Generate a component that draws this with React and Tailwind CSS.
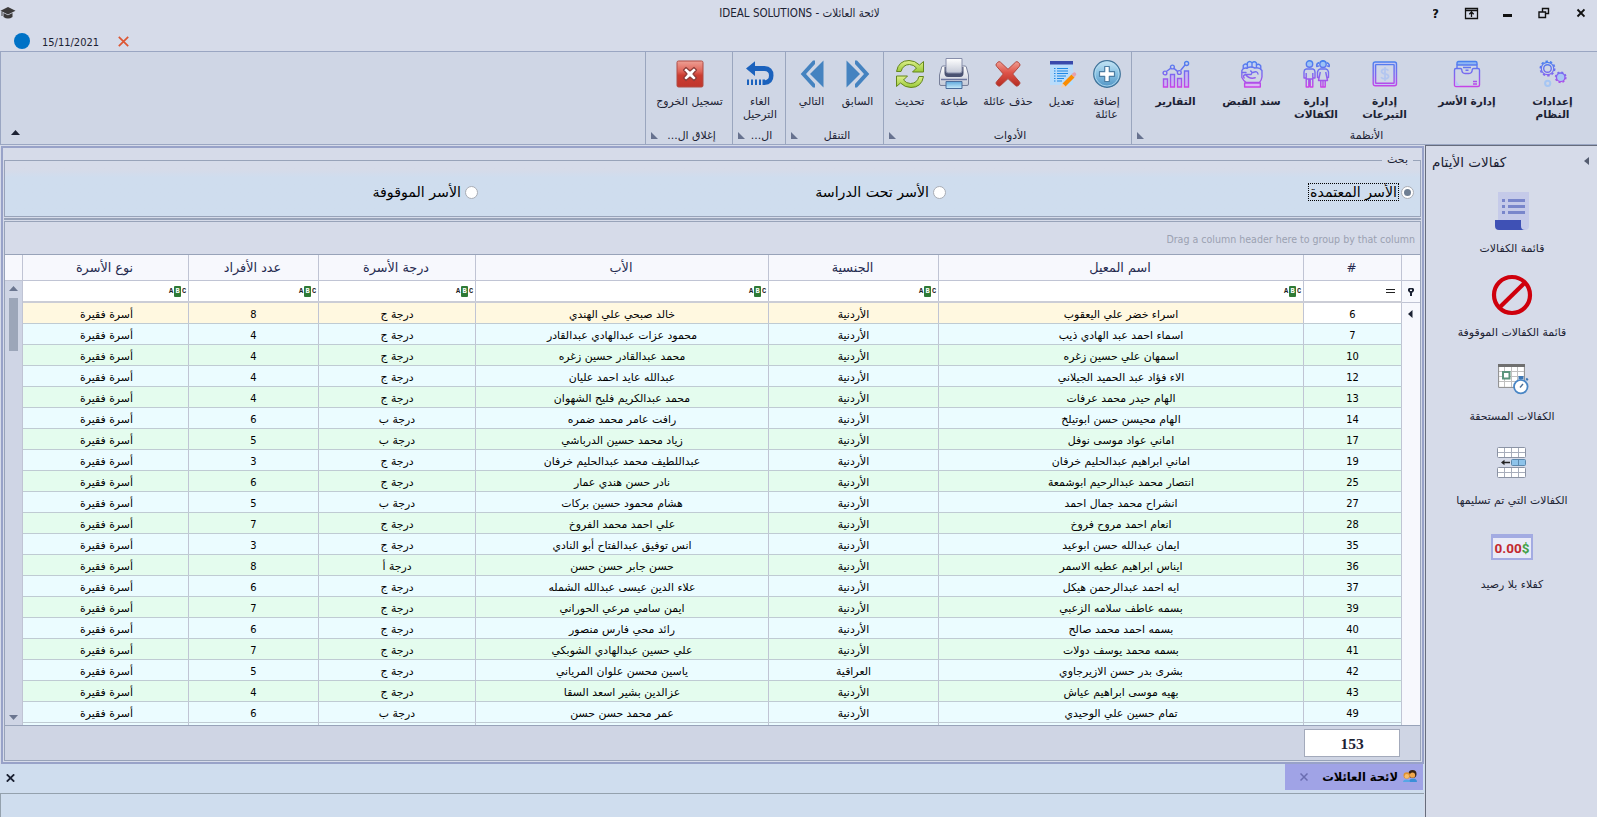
import React from "react";

const rows = [
  [6, "اسراء خضر علي اليعقوب", "الأردنية", "خالد صبحي علي الهندي", "درجة ج", 8],
  [7, "اسماء احمد عبد الهادي ذيب", "الأردنية", "محمود عزات عبدالهادي عبدالقادر", "درجة ج", 4],
  [10, "اسمهان علي حسين زغره", "الأردنية", "محمد عبدالقادر حسين زغره", "درجة ج", 4],
  [12, "الاء فؤاد عبد الحميد الجيلاني", "الأردنية", "عبدالله عايد احمد عليان", "درجة ج", 4],
  [13, "الهام حيدر محمد عرفات", "الأردنية", "محمد عبدالكريم فليح الشهوان", "درجة ج", 4],
  [14, "الهام محيسن حسن ابوتيلخ", "الأردنية", "رافت عامر محمد ضمره", "درجة ب", 6],
  [17, "اماني عواد موسى نوفل", "الأردنية", "زياد محمد حسين الدرباشي", "درجة ب", 5],
  [19, "اماني ابراهيم عبدالحليم خرفان", "الأردنية", "عبداللطيف محمد عبدالحليم خرفان", "درجة ج", 3],
  [25, "انتصار محمد عبدالرحيم ابوشمعة", "الأردنية", "نادر حسن هندي عمار", "درجة ج", 6],
  [27, "انشراح محمد جمال احمد", "الأردنية", "هشام محمود حسين بركات", "درجة ب", 5],
  [28, "انعام احمد مروح فروخ", "الأردنية", "علي احمد محمد الفروخ", "درجة ج", 7],
  [35, "ايمان عبدالله حسن ابوعيد", "الأردنية", "انس توفيق عبدالفتاح أبو النادي", "درجة ج", 3],
  [36, "ايناس ابراهيم عطيه الاسمر", "الأردنية", "حسن جابر حسن حسن", "درجة أ", 8],
  [37, "ايه احمد عبدالرحمن هيكل", "الأردنية", "علاء الدين عيسى عبدالله الشمله", "درجة ج", 6],
  [39, "بسمه عاطف سلامه الزعبي", "الأردنية", "ايمن سامي مرعي الحوراني", "درجة ج", 7],
  [40, "بسمه احمد محمد صالح", "الأردنية", "رائد محي فارس منصور", "درجة ج", 6],
  [41, "بسمه محمد يوسف دولات", "الأردنية", "علي حسين عبدالهادي الشوبكي", "درجة ج", 7],
  [42, "بشرى بدر حسن الازيرجاوي", "العراقية", "ياسين محسن علوان المرياني", "درجة ج", 5],
  [43, "بهيه موسى ابراهيم عياش", "الأردنية", "عزالدين بشير اسعد السقا", "درجة ج", 4],
  [49, "تمام حسين علي الوحيدي", "الأردنية", "عمر محمد حسن حسن", "درجة ب", 6],
];

const GRID = "grid grid-cols-[166px_130px_157px_293px_170px_365px_98px]";
const SANS = "font-['DejaVu_Sans',sans-serif]";
const NARROW = "font-['DejaVu_Sans_Condensed','DejaVu_Sans',sans-serif] [font-stretch:condensed]";

/* ---------- ribbon icons ---------- */

function Grad({ id }) {
  return (
    <defs>
      <linearGradient id={id} gradientUnits="userSpaceOnUse" x1="0" y1="0" x2="0" y2="28">
        <stop offset="0" stopColor="#4484ee" />
        <stop offset="0.5" stopColor="#7b68f0" />
        <stop offset="1" stopColor="#cf3fe6" />
      </linearGradient>
    </defs>
  );
}

function ReportIcon() {
  return (
    <svg width="28" height="28" viewBox="0 0 28 28" fill="none" stroke="url(#g1)" strokeWidth="1.4">
      <Grad id="g1" />
      <path fill="#c9b5f3" d="M1.5 19h4v8h-4zM8.500 14.500h4v12.500h-4zM15.500 18.500h4v8.500h-4zM22.500 11h4v16h-4z" />
      <path d="M4.300 11.500 8.600 8.400M12 8.400l3.500 3M18.600 10.500 23 5" />
      <circle cx="3" cy="13" r="1.900" /><circle cx="10.400" cy="7" r="1.900" /><circle cx="17.300" cy="12.500" r="1.900" /><circle cx="24.600" cy="3.500" r="2" />
    </svg>
  );
}

function FistIcon() {
  return (
    <svg width="24" height="28" viewBox="0 0 26 28" fill="none" stroke="url(#g2)" strokeWidth="1.5" strokeLinejoin="round" strokeLinecap="round" preserveAspectRatio="none">
      <Grad id="g2" />
      <path fill="#bfd0f6" d="M3.500 8V5.500Q6 2.800 8 5V8M8 6V2.800Q10.500.2 13 2.800V7M13 3Q15.500.5 17.800 3V7.500M17.800 5Q20.500 3 22.500 6V9" />
      <path d="M2 10.500Q3.500 7.500 7 8.200 12 6 16 8 21 7 23.800 10.500V17Q23.500 20 21 22.500H6.500Q4 21 2 17.500Z" />
      <path d="M2.500 12.500h4M4.500 18Q2.500 15.500 6 14.500H12Q14 12 11.500 11M6 14.500Q10 19.500 16.500 17.800M14 12.500Q19 10.500 19.500 14" />
      <path fill="#d9b9f5" d="M5 23h17v4H5z" />
    </svg>
  );
}

function KidsIcon() {
  return (
    <svg width="28" height="28" viewBox="0 0 28 28" fill="none" stroke="url(#g3)" strokeWidth="1.4" strokeLinejoin="round">
      <Grad id="g3" />
      <circle cx="7.500" cy="4" r="3.200" fill="#9cc3f5" />
      <path d="M4 9h7Q13 9.500 13 12v6h-2.200M4 9Q2 9.500 2 12v6h2.200M4.200 13v14h2.600v-7h1.400v7h2.600V13M4.200 19h6.600" />
      <circle cx="21" cy="4.300" r="3.200" fill="#9cc3f5" />
      <path d="M17.500 2.500Q14 3.500 14.800 6.500L17 5.800M24.500 2.500Q28 3.500 27.200 6.500L25 5.800M18 2Q21-.6 24 2" />
      <path d="M18 9h6Q26 9.500 26.500 12v5.500h-2M18 9Q16 9.500 15.500 12v5.500h2M18.300 12 16.500 20.500h9L23.700 12M18.800 21v6h2.200v-6M21 21v6h2.200v-6" />
    </svg>
  );
}

function DollarIcon() {
  return (
    <svg width="26" height="28" viewBox="0 0 26 28" fill="none" stroke="url(#g4)" strokeWidth="1.4">
      <Grad id="g4" />
      <rect x="1.200" y="2" width="23.300" height="23.800" rx="2" fill="#c3c6f3" />
      <rect x="3.600" y="4.600" width="18.500" height="18.600" rx="0.500" fill="#cfd6e8" />
      <path d="M16.500 10.500Q15 9 12.500 9.200 9.500 9.500 9.500 11.700 10 13.500 13 13.900 16.600 14.400 16.600 16.500 16.500 18.700 13 18.900 10.300 18.900 9 17.300M13 7v14" stroke="#b3c6f0" strokeWidth="1.700" />
    </svg>
  );
}

function ArchiveIcon() {
  return (
    <svg width="28" height="28" viewBox="0 0 28 28" fill="none" stroke="url(#g5)" strokeWidth="1.4" strokeLinejoin="round">
      <Grad id="g5" />
      <path fill="#8fb8f4" d="M4 5V3Q4 1.500 5.500 1.500h17Q24 1.500 24 3v2" />
      <path d="M4 9V5h20v4M1.500 10Q1.500 8.500 3 8.500h4.500Q8.500 8.500 8.700 9.500 9 13.500 12 13.500h4Q19 13.500 19.300 9.500 19.500 8.500 20.500 8.500H25Q26.500 8.500 26.500 10V25Q26.500 26.500 25 26.500H3Q1.500 26.500 1.500 25ZM10 7.500h8M12.500 10.200h3M20 21.500h4M20 24h4" />
      <path d="M2.500 20 7 26H2.500Z" fill="#b9c9f5" stroke="none" />
    </svg>
  );
}

function GearsIcon() {
  return (
    <svg width="28" height="28" viewBox="0 0 28 28" fill="none" stroke="url(#g6)" strokeWidth="1.4">
      <Grad id="g6" />
      <circle cx="8.500" cy="8.500" r="3.800" />
      <circle cx="8.500" cy="8.500" r="6.200" strokeWidth="1.200" />
      <circle cx="8.500" cy="8.500" r="7.200" strokeDasharray="2.500 2.020" strokeWidth="1.600" />
      <circle cx="21.700" cy="17.300" r="4.300" fill="#a9c6f5" />
      <circle cx="21.700" cy="17.300" r="5.200" strokeDasharray="2 2.080" strokeWidth="1.500" />
      <circle cx="8.700" cy="23.300" r="2.600" stroke="#a6c6f3" strokeWidth="2" />
    </svg>
  );
}

function AddIcon() {
  return (
    <svg width="30" height="30" viewBox="0 0 30 30">
      <defs><linearGradient id="add" x1="0" y1="0" x2="0" y2="1"><stop offset="0" stopColor="#c5e5f5" /><stop offset="0.500" stopColor="#86c0e2" /><stop offset="1" stopColor="#4f93c4" /></linearGradient></defs>
      <circle cx="15" cy="15" r="13.300" fill="url(#add)" stroke="#3f7298" strokeWidth="1.200" />
      <circle cx="15" cy="15" r="12" fill="none" stroke="#b5dcf0" strokeWidth="0.800" />
      <path d="M12.700 7.500h4.600v5.200h5.200v4.600h-5.200v5.200h-4.600v-5.200H7.500v-4.600h5.200z" fill="#fff" stroke="#4b7da3" strokeWidth="1.200" strokeLinejoin="round" />
    </svg>
  );
}

function EditIcon() {
  return (
    <svg width="30" height="30" viewBox="0 0 30 30">
      <path fill="#b9dcfb" d="M3 5h23v21H3z" />
      <path fill="#3949ab" d="M3 2h23v3.500H3z" />
      <path stroke="#1e88e5" strokeWidth="1.200" d="M7 9.500h1.500M10 9.500h11M7 12h1.500M10 12h11M7 14.500h1.500M10 14.500h11M7 17h1.500M10 17h9M7 19.500h1.500M10 19.500h7M7 22h1.500M10 22h5" />
      <path fill="#fb8c00" d="m15.500 24.500 9-9 3 3-9 9z" />
      <path fill="#f7cfa8" d="m15.500 24.500 3 3-4.500 1.200z" />
      <path fill="#e5a0b0" d="M26.300 13.700q1.200-1 2.400.2 1.200 1.200.2 2.400l-1.400 1.800-3-3z" />
    </svg>
  );
}

function DeleteIcon() {
  return (
    <svg width="30" height="30" viewBox="0 0 30 30">
      <defs><linearGradient id="del" x1="0" y1="0" x2="0" y2="1"><stop offset="0" stopColor="#ef9d92" /><stop offset="0.450" stopColor="#de5348" /><stop offset="1" stopColor="#b52c22" /></linearGradient></defs>
      <path d="M7.500 3.200Q6 2 4.700 3.300L3.500 4.600Q2.300 6 3.600 7.300L10.300 15 3.600 22.700Q2.300 24 3.500 25.300L4.900 26.700Q6.200 27.700 7.600 26.500L15 19.600 22.400 26.500Q23.800 27.700 25.100 26.700L26.500 25.300Q27.700 24 26.400 22.700L19.700 15 26.400 7.300Q27.700 6 26.500 4.600L25.300 3.300Q24 2 22.500 3.200L15 10.300Z" fill="url(#del)" stroke="#b3473e" strokeWidth="1" strokeLinejoin="round" />
    </svg>
  );
}

function PrintIcon() {
  return (
    <svg width="32" height="32" viewBox="0 0 32 32">
      <defs>
        <linearGradient id="pr" x1="0" y1="0" x2="0" y2="1"><stop offset="0" stopColor="#ffffff" /><stop offset="1" stopColor="#c3c8d6" /></linearGradient>
        <linearGradient id="pb" x1="0" y1="0" x2="0" y2="1"><stop offset="0" stopColor="#5fa9dc" /><stop offset="1" stopColor="#c9ecfb" /></linearGradient>
      </defs>
      <path d="M5 8Q4 8 3.700 9L1.500 17v9q0 1.500 1.500 1.500h26q1.500 0 1.500-1.500v-9L28.300 9Q28 8 27 8z" fill="url(#pr)" stroke="#777f99" />
      <path d="M6.500 9v6q0 4 3.500 4h12q3.500 0 3.500-4V9z" fill="#4a5271" />
      <path d="M8 .5h16V13q0 2-2 2H10q-2 0-2-2z" fill="url(#pr)" stroke="#878eaa" />
      <path d="M3 21.500h26" stroke="#6d77a0" strokeWidth="1.500" />
      <path d="M8 23.500h16v7H8z" fill="url(#pb)" stroke="#4a6d9c" />
    </svg>
  );
}

function RefreshIcon() {
  return (
    <svg width="30" height="30" viewBox="0 0 30 30" strokeLinejoin="round">
      <defs><linearGradient id="rf" x1="0" y1="0" x2="0" y2="1"><stop offset="0" stopColor="#dff08c" /><stop offset="1" stopColor="#9aca38" /></linearGradient></defs>
      <path d="M1.500 12.500Q3.500 1.500 14 1.500q6 0 10.500 4.500l4-3.500v10.500h-11l4-4Q18.500 5.500 14.500 5.500q-6.500 0-8.500 7z" fill="url(#rf)" stroke="#64861c" />
      <path d="M28.500 17.500Q26.500 28.500 16 28.500q-6 0-10.500-4.500l-4 3.500v-10.500h11l-4 4q3 3.500 7 3.500 6.500 0 8.500-7z" fill="url(#rf)" stroke="#64861c" />
    </svg>
  );
}

function PrevIcon({ flip }) {
  return (
    <svg width="24" height="28" viewBox="0 0 24 28" className={flip ? "-scale-x-100" : ""} fill="#4583c0">
      <path d="M.5.500 14 14 .5 27.500z" />
      <path d="M9 .5h2L23.300 14 11 27.500H9V24L18 14 9 4z" />
    </svg>
  );
}

function UndoIcon() {
  return (
    <svg width="28" height="26" viewBox="0 0 28 26" fill="#1b62bd">
      <path d="M0 7.500 9 .2V5h9.500q9 .5 9 9.500t-9 9.500H18v-4.500q5-.3 5-5T18 10H9v5z" />
      <path d="M1 18.500h2V24H1zM5 18.500h2V24H5zM9 18.500h2V24H9zM13 18.500h2V24h-2zM16.500 18.500H19V24h-2.500z" />
    </svg>
  );
}

function ExitIcon() {
  return (
    <svg width="28" height="28" viewBox="0 0 28 28">
      <defs><linearGradient id="ex" x1="0" y1="0" x2="0" y2="1"><stop offset="0" stopColor="#eda095" /><stop offset="0.400" stopColor="#df6357" /><stop offset="0.550" stopColor="#cb3d31" /><stop offset="1" stopColor="#c0362b" /></linearGradient></defs>
      <rect x="1" y="1" width="26" height="26" rx="1.500" fill="url(#ex)" stroke="#b04d44" />
      <path d="M10 7.500 7.500 10 11 14l-3.500 4L10 20.500 14 17l4 3.500 2.500-2.500L17 14l3.500-4L18 7.500 14 11z" fill="#fff" stroke="#8c3a35" strokeWidth="1.200" strokeLinejoin="round" />
    </svg>
  );
}

/* ---------- side panel icons ---------- */

function ScrollIcon() {
  return (
    <svg width="36" height="38" viewBox="0 0 36 38">
      <path fill="#c5cae9" d="M4 0h31v34q0 4-4 4H14V30H4z" />
      <path fill="#7986cb" d="M8 7h3v3H8zM14 7h17v3H14zM8 13h3v3H8zM14 13h17v3H14zM8 19h3v3H8zM14 19h17v3H14z" />
      <path fill="#3f51b5" d="M1 28h26v6q0 4 4 4H5q-4 0-4-4z" />
    </svg>
  );
}

function BlockIcon() {
  return (
    <svg width="42" height="42" viewBox="0 0 42 42" fill="none" stroke="#cf000c" strokeWidth="4.200">
      <circle cx="21" cy="21" r="18" /><path d="M34 8.500 8.500 33.500" />
    </svg>
  );
}

function CalendarIcon() {
  return (
    <svg width="31" height="31" viewBox="0 0 31 31" className="ml-[3px]">
      <path fill="#fff" stroke="#8a8a8a" d="M.6 2h25.800v21.400H.6z" />
      <path stroke="#c0c0c0" d="M1 7.500h25M1 12.500h25M1 17.500h25M6.500 3v20M13.500 3v20M19.500 3v20" />
      <path fill="#6f6f6f" d="M0 0h27v3H0z" />
      <path fill="#fff" stroke="#5a947c" strokeWidth="2" d="M5 8h6.500v6.500H5z" />
      <path fill="#3d77b5" d="M20.500 12h5v3h-5zM27.500 15l1.500-1.200 1.500 1.700L29 17z" />
      <circle cx="22.800" cy="22.600" r="6.800" fill="#fff" stroke="#4a86c5" strokeWidth="1.800" />
      <path d="m22 23.500 3-3.500" stroke="#4a6d95" strokeWidth="1.300" />
    </svg>
  );
}

function TablesIcon() {
  return (
    <svg width="29" height="31" viewBox="0 0 29 31" className="mr-[1px] mb-[1px]">
      <g fill="#fff" stroke="#8b93a4">
        <rect x=".5" y=".5" width="28" height="10" rx="1" /><rect x=".5" y="20.500" width="28" height="10" rx="1" />
      </g>
      <path stroke="#a7adbb" d="M1 5.500h27M1 25.500h27M7.500 1v9M14.500 1v9M21.500 1v9M7.500 21v9M14.500 21v9M21.500 21v9" />
      <rect x="14.500" y="12.500" width="14" height="6" rx="1" fill="#8dc3ea" stroke="#5b88ad" />
      <path d="M21.500 13v5" stroke="#5b88ad" />
      <path d="M4 15.500 7.500 12.700v2.100H13v1.400H7.500v2.100z" fill="#222" />
    </svg>
  );
}

function MoneyIcon() {
  return (
    <div className="flex h-[26px] w-[42px] items-center justify-center border-2 border-t-4 border-[#a3abe2] bg-[#e9eaf7] pt-[2px] font-['Roboto',sans-serif] text-[13.500px] leading-none font-bold [font-stretch:normal]">
      <span className="text-[#c2282f]">0.00</span><span className="text-[#43a047]">$</span>
    </div>
  );
}

/* ---------- ribbon ---------- */

function RibbonButton({ icon, lines, width, bold }) {
  return (
    <div className={`${width} flex shrink-0 flex-col items-center`}>
      <div className="flex h-[42px] items-center justify-center pt-[2px]">{icon}</div>
      <div className={`mt-[1px] flex flex-col items-center whitespace-nowrap ${bold ? "text-[10.600px] font-bold" : "text-[10.900px]"} leading-[13px]`}>
        {lines.map((l) => <span key={l}>{l}</span>)}
      </div>
    </div>
  );
}

function RibbonGroup({ width, title, children, pad = "", last }) {
  return (
    <div className={`${width} flex shrink-0 flex-col ${last ? "" : "border-r border-[#9aa6be]"}`}>
      <div className={`flex h-[76px] justify-center ${pad}`}>{children}</div>
      <div className="flex h-[15px] items-center">
        <svg width="7" height="7" viewBox="0 0 7 7" className="ml-[5px] shrink-0"><path d="M0 0v7h7z" fill="#67728f" /></svg>
        <span dir="rtl" className="mr-[7px] flex-1 pt-[1px] text-center text-[10.900px] leading-[14px] whitespace-nowrap">{title}</span>
      </div>
    </div>
  );
}

function Radio({ label, checked, className = "" }) {
  return (
    <div className={`flex items-center gap-[3px] ${className}`}>
      <span className={`px-[1px] text-[14.200px] leading-[16px] text-black ${checked ? "outline-1 outline-dotted outline-black" : ""}`}>{label}</span>
      <span className="flex size-[13px] items-center justify-center rounded-full border border-[#a9adb5] bg-white">
        {checked && <span className="size-[7px] rounded-full bg-[#6f7f93]" />}
      </span>
    </div>
  );
}

function AbcMark() {
  return (
    <div className="flex items-center gap-[1px] font-['Liberation_Mono',monospace] text-[7px] leading-none font-bold text-[#222]">
      <span className="w-[4px]">A</span>
      <span className="flex h-[11px] w-[7px] items-center justify-center rounded-[1px] bg-[#2f7a35] text-white">B</span>
      <span className="w-[4px]">C</span>
    </div>
  );
}

function SideItem({ icon, label }) {
  return (
    <div className="flex h-[84px] flex-col items-center pl-[1px]">
      <div className="flex h-[42px] items-center">{icon}</div>
      <span className="mt-[10px] text-[10.900px] leading-[14px]">{label}</span>
    </div>
  );
}

export default function App() {
  const headers = ["نوع الأسرة", "عدد الأفراد", "درجة الأسرة", "الأب", "الجنسية", "اسم المعيل", "#"];
  const cell = "flex items-center justify-center border-r border-[#c0c4d4] whitespace-nowrap";
  return (
    <div className={`flex h-[817px] w-[1597px] flex-col overflow-hidden bg-[#d6dbe9] text-[#1c2233] ${SANS}`}>
      {/* title bar */}
      <div className="grid h-[27px] shrink-0 grid-cols-[1fr_auto_1fr] items-center">
        <svg width="16" height="12" viewBox="0 0 16 12" fill="#3c3a3a" className="mb-[1px]"><path d="M8 0 15.500 3.800 8 7.500.5 3.800z" /><path d="M3.500 6v4Q8 13 12.500 10V6L8 8.300zM1.500 4.500h1V9h-1z" /></svg>
        <span className={`pl-[2px] text-[11.500px] ${NARROW}`}>IDEAL SOLUTIONS - لائحة العائلات</span>
        <div className="mr-[12px] mb-[1px] flex items-center justify-end">
          <svg width="152" height="15" viewBox="0 0 152 15" fill="none" stroke="#111" strokeWidth="1.500">
            <text x="-1" y="11.500" fontSize="12" fontWeight="bold" fill="#111" stroke="none">?</text>
            <path d="M32.500 2.500h12v10h-12zM32.500 4.500h12M38.500 11V6M36.300 8.200l2.200-2.200 2.200 2.200" strokeWidth="1.300" />
            <path d="M70 9.500h9" strokeWidth="3" />
            <path d="M109.500 5.500v-3h6v5h-2.500M106 6h6.500v5.500H106z" strokeWidth="1.400" />
            <path d="m144.500 3.500 7 7m0-7-7 7" strokeWidth="1.900" />
          </svg>
        </div>
      </div>
      {/* quick access */}
      <div className="flex h-[24px] shrink-0 items-center pl-[14px]">
        <span className="mt-[3px] size-[16px] rounded-full bg-[#0072c6]" />
        <span className={`mt-[7px] ml-[12px] text-[11px] leading-[13px] ${NARROW}`}>15/11/2021</span>
        <svg width="11" height="11" viewBox="0 0 11 11" className="mt-[4px] ml-[19px]" stroke="#dd5633" strokeWidth="1.700"><path d="m.8.800 9.400 9.400m0-9.400L.8 10.200" /></svg>
      </div>
      {/* ribbon */}
      <div className="flex h-[94px] shrink-0 border-y border-l border-[#9aa6c2] bg-[#cfd6e5]">
        <div className="flex w-[645px] shrink-0 items-end border-r border-[#9aa6be] pb-[9px] pl-[10px]">
          <svg width="9" height="5" viewBox="0 0 9 5"><path d="M0 5 4.500 0 9 5z" fill="#1c2233" /></svg>
        </div>
        <RibbonGroup width="w-[87px]" pad="pl-[1px]" title="إغلاق ال...">
          <RibbonButton width="w-[84px]" icon={<ExitIcon />} lines={["تسجيل الخروج"]} />
        </RibbonGroup>
        <RibbonGroup width="w-[53px]" pad="pl-[2px]" title="ال...">
          <RibbonButton width="w-[50px]" icon={<UndoIcon />} lines={["الغاء", "الترحيل"]} />
        </RibbonGroup>
        <RibbonGroup width="w-[98px]" title="التنقل">
          <RibbonButton width="w-[46px]" icon={<PrevIcon flip />} lines={["التالي"]} />
          <RibbonButton width="w-[46px]" icon={<PrevIcon />} lines={["السابق"]} />
        </RibbonGroup>
        <RibbonGroup width="w-[248px]" pad="pl-[2px]" title="الأدوات">
          <RibbonButton width="w-[43px]" icon={<RefreshIcon />} lines={["تحديث"]} />
          <RibbonButton width="w-[46px]" icon={<PrintIcon />} lines={["طباعة"]} />
          <RibbonButton width="w-[62px]" icon={<DeleteIcon />} lines={["حذف عائلة"]} />
          <RibbonButton width="w-[45px]" icon={<EditIcon />} lines={["تعديل"]} />
          <RibbonButton width="w-[45px]" icon={<AddIcon />} lines={["إضافة", "عائلة"]} />
        </RibbonGroup>
        <RibbonGroup width="w-[464px]" title="الأنظمة" last>
          <div className="w-[15px] shrink-0" />
          <RibbonButton bold width="w-[68px]" icon={<ReportIcon />} lines={["التقارير"]} />
          <RibbonButton bold width="w-[84px]" icon={<FistIcon />} lines={["سند القبض"]} />
          <RibbonButton bold width="w-[45px]" icon={<KidsIcon />} lines={["إدارة", "الكفالات"]} />
          <RibbonButton bold width="w-[92px]" icon={<DollarIcon />} lines={["إدارة", "التبرعات"]} />
          <RibbonButton bold width="w-[73px]" icon={<ArchiveIcon />} lines={["إدارة الأسر"]} />
          <RibbonButton bold width="w-[98px]" icon={<GearsIcon />} lines={["إعدادات", "النظام"]} />
        </RibbonGroup>
      </div>
      <div className="flex min-h-0 flex-1">
        <div className="flex w-[1425px] shrink-0 flex-col">
          {/* document frame */}
          <div className="mt-[1px] ml-[1px] flex h-[618px] w-[1423px] shrink-0 flex-col border-2 border-[#98a2c8] px-[1px]">
            {/* search box */}
            <div className="mt-[12px] flex h-[57px] shrink-0 flex-col border border-[#98a3b9] bg-linear-to-b from-[#d6dbe9] from-15% to-[#cfddee] to-30%">
              <span className="-mt-[8px] mr-[7px] h-[15px] self-end bg-[#d6dbe9] px-[5px] text-[11px] leading-[14px]">بحث</span>
              <div className="mt-[16px] flex items-center justify-end pr-[6px]">
                <Radio label="الأسر الموقوفة" />
                <Radio className="w-[468px] justify-end" label="الأسر تحت الدراسة" />
                <Radio className="w-[468px] justify-end" label="الأسر المعتمدة" checked />
              </div>
            </div>
            <div className="mt-[1px] h-[2px] shrink-0 bg-[#98a3b9]" />
            {/* grid */}
            <div className="mt-[1px] flex min-h-0 flex-1 flex-col border border-[#98a3b9]">
              <div className={`flex h-[33px] shrink-0 items-center justify-end border-b border-[#98a3b9] bg-[#d6dbe9] pt-[3px] pr-[5px] text-[10.550px] text-[#9ba1b1] ${NARROW}`}>
                Drag a column header here to group by that column
              </div>
              <div className="flex h-[470px] shrink-0">
                <div className="flex w-[18px] shrink-0 flex-col">
                  <div className="h-[26px] shrink-0 border-r border-b border-[#c0c4d4] bg-[#f7f8fd]" />
                  <div className="flex flex-1 flex-col items-center border-r border-[#c0c4d4] bg-[#cfd5e5] pt-[5px] pb-[5px]">
                    <svg width="9" height="5" viewBox="0 0 9 5"><path d="M0 5 4.500 0 9 5z" fill="#6b7690" /></svg>
                    <div className="mt-[7px] h-[53px] w-[9px] bg-[#9ca6b9]" />
                    <svg width="9" height="5" viewBox="0 0 9 5" className="mt-auto"><path d="M0 0 4.500 5 9 0z" fill="#6b7690" /></svg>
                  </div>
                </div>
                <div className="flex w-[1379px] shrink-0 flex-col overflow-hidden">
                  <div className={`${GRID} h-[26px] shrink-0 border-b border-[#c0c4d4] bg-[#f7f8fd] text-[12.800px] text-[#262b50]`}>
                    {headers.map((h) => (
                      <div key={h} className={`${cell} ${h === "#" ? "pr-[2px] text-[12px]" : "pr-[2px]"}`}>{h}</div>
                    ))}
                  </div>
                  <div className={`${GRID} h-[22px] shrink-0 border-b-2 border-[#cbcdd6] bg-white`}>
                    {headers.map((h) => (
                      <div key={h} className="flex items-center justify-end border-r border-[#c0c4d4] pr-[2px]">
                        {h === "#" ? <span className="mr-[4px] h-[4px] w-[9px] border-y border-[#222]" /> : <AbcMark />}
                      </div>
                    ))}
                  </div>
                  {rows.map((r, i) => {
                    const bg = i === 0 ? "bg-[#fff8e0]" : i % 2 ? "bg-[#ebfcff]" : "bg-[#e4fcee]";
                    return (
                      <div key={r[0]} className={`${GRID} ${bg} h-[21px] shrink-0 border-b border-[#bfcbd3] text-[10.900px] leading-[14px] text-black`}>
                        <div className={`${cell} pt-[4px] pl-[2px]`}>أسرة فقيرة</div>
                        <div className={`${cell} pt-[4px] text-[11px] ${NARROW}`}>{r[5]}</div>
                        <div className={`${cell} pt-[4px]`}>{r[4]}</div>
                        <div className={`${cell} pt-[4px]`}>{r[3]}</div>
                        <div className={`${cell} pt-[4px]`}>{r[2]}</div>
                        <div className={`${cell} pt-[4px]`}>{r[1]}</div>
                        <div className={`${cell} pt-[4px] text-[11px] ${NARROW} ${i === 0 ? "bg-white" : ""}`}>{r[0]}</div>
                      </div>
                    );
                  })}
                  <div className={`${GRID} h-[2px] bg-[#ebfcff]`}>
                    {headers.map((h) => <div key={h} className="border-r border-[#c0c4d4]" />)}
                  </div>
                </div>
                <div className="flex w-[18px] shrink-0 flex-col bg-[#f7f8fd] pr-[1px]">
                  <div className="-mr-[1px] h-[26px] border-b border-[#c0c4d4]" />
                  <div className="-mr-[1px] flex h-[22px] items-center justify-center border-b border-[#c0c4d4] pr-[1px]">
                    <svg width="6" height="8" viewBox="0 0 6 8"><path d="M1 0h4l1 1v2L4 5v3H2V5L0 3V1zM2 1.500V3h2V1.500z" fill="#1c2233" fillRule="evenodd" /></svg>
                  </div>
                  <div className="flex h-[21px] items-center justify-center">
                    <svg width="5" height="8" viewBox="0 0 5 8"><path d="M4.500 0v8L0 4z" fill="#1c2233" /></svg>
                  </div>
                </div>
              </div>
              <div className="flex flex-1 items-start justify-end border-t border-[#98a3b9] bg-[#cfd5e4] pt-[3px] pr-[20px]">
                <div className="flex h-[28px] w-[96px] items-center justify-center border border-[#a3aabb] bg-white pt-[1px] font-['Liberation_Serif',serif] text-[15.500px] font-bold">153</div>
              </div>
            </div>
            <div className="h-[1px] shrink-0" />
          </div>
          {/* document tabs */}
          <div className="flex h-[29px] shrink-0 items-start justify-between bg-[#cfddee] pr-[2px]">
            <svg width="9" height="8" viewBox="0 0 9 8" className="mt-[10px] ml-[6px]" stroke="#1c2233" strokeWidth="1.800"><path d="m.8.300 7.400 7.400m0-7.400L.8 7.700" /></svg>
            <div className="flex h-[26px] w-[138px] items-center justify-end bg-[#a0a3e6] pr-[6px]">
              <svg width="8" height="8" viewBox="0 0 8 8" className="mr-[14px]" stroke="#6a6db0" strokeWidth="1.500"><path d="m.5.500 7 7m0-7-7 7" /></svg>
              <span className="pt-[1px] text-[11.500px] font-bold whitespace-nowrap text-black">لائحة العائلات</span>
              <svg width="14" height="13" viewBox="0 0 14 13" className="mb-[2px] ml-[5px]">
                <circle cx="9.500" cy="4" r="4" fill="#3a2413" /><circle cx="3.800" cy="5.500" r="3.300" fill="#e0912f" />
                <circle cx="9.500" cy="5.200" r="2.600" fill="#f0a74c" /><circle cx="3.800" cy="6.300" r="2.200" fill="#f7bd6d" />
                <path d="M6 12q0-3.500 4-3.500t4 3.500z" fill="#3b8fd8" /><path d="M0 12q0-2.500 3.500-2.500T7 12z" fill="#56a7e6" />
              </svg>
            </div>
          </div>
          <div className="mr-[1px] flex-1 border-t border-l border-[#94a1ad] bg-[#cfddee]" />
        </div>
        {/* side panel */}
        <div className="flex flex-1 flex-col border-t border-l border-[#666c7c] bg-[#d6dbe9]">
          <div className="flex h-[34px] items-center justify-between pr-[8px] pb-[2px] pl-[6px]">
            <span className="text-[13.600px]">كفالات الأيتام</span>
            <svg width="5" height="8" viewBox="0 0 5 8" className="-mt-[3px]"><path d="M5 0v8L0 4z" fill="#555d70" /></svg>
          </div>
          <div className="mt-[10px] flex flex-col">
            <SideItem icon={<ScrollIcon />} label="قائمة الكفالات" />
            <SideItem icon={<BlockIcon />} label="قائمة الكفالات الموقوفة" />
            <SideItem icon={<CalendarIcon />} label="الكفالات المستحقة" />
            <SideItem icon={<TablesIcon />} label="الكفالات التي تم تسليمها" />
            <SideItem icon={<MoneyIcon />} label="كفلاء بلا رصيد" />
          </div>
        </div>
      </div>
    </div>
  );
}
